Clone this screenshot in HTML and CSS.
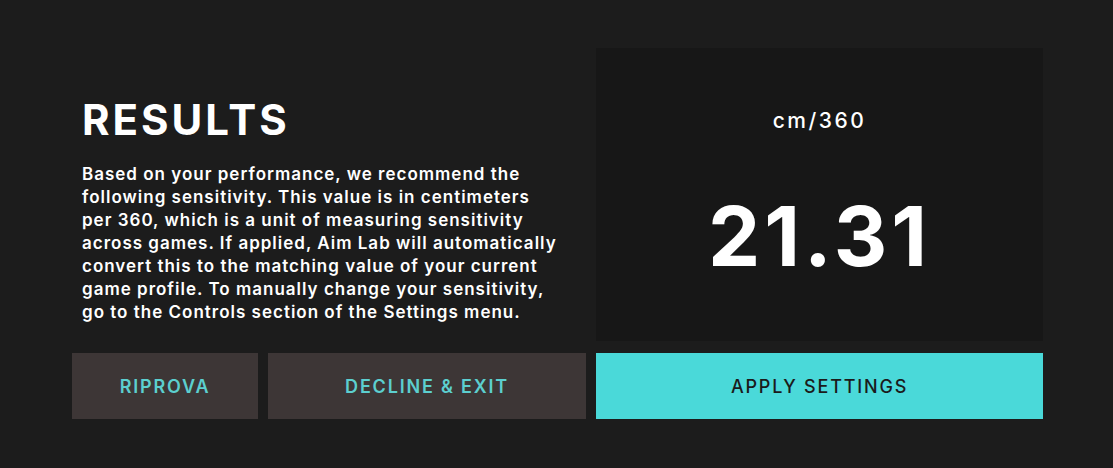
FILE: index.html
```html
<!DOCTYPE html>
<html lang="en">
<head>
    <meta charset="UTF-8">
    <meta name="viewport" content="width=device-width, initial-scale=1.0">
    <title>Results</title>
    <link rel="stylesheet" href="styles.css">
</head>
<body>
    <div class="screen">
        <div class="summary">
            <h1>RESULTS</h1>
            <p>Based on your performance, we recommend the following sensitivity. This value is in centimeters per 360, which is a unit of measuring sensitivity across games. If applied, Aim Lab will automatically convert this to the matching value of your current game profile. To manually change your sensitivity, go to the Controls section of the Settings menu.</p>
        </div>
        <div class="value-panel">
            <div class="unit">cm/360</div>
            <div class="value">21.31</div>
        </div>
        <button class="btn btn-dark">RIPROVA</button>
        <button class="btn btn-dark">DECLINE &amp; EXIT</button>
        <button class="btn btn-apply">APPLY SETTINGS</button>
    </div>
</body>
</html>
```
FILE: styles.css
```css
body {
    margin: 0;
    background-color: #1c1c1c;
    color: #fff;
    font-family: Inter, 'Noto Sans', sans-serif;
}
.screen {
    display: grid;
    grid-template-columns: 186px 318px 447px;
    grid-template-rows: 293px 66px;
    column-gap: 10px;
    row-gap: 12px;
    padding: 48px 0 0 72px;
}
.summary {
    grid-column: 1 / 3;
    padding: 50px 0 0 10px;
}
.summary h1 {
    margin: 0;
    font-size: 42px;
    font-weight: 700;
    letter-spacing: 3px;
    line-height: 44px;
}
.summary p {
    margin: 21px 0 0 0;
    width: 476px;
    font-size: 17px;
    font-weight: 600;
    line-height: 23px;
    letter-spacing: 1px;
}
.value-panel {
    background-color: #171717;
    display: flex;
    flex-direction: column;
    align-items: center;
}
.unit {
    margin-top: 60px;
    font-size: 21px;
    font-weight: 500;
    letter-spacing: 2.5px;
}
.value {
    margin-top: 58px;
    font-size: 83px;
    font-weight: 700;
    line-height: 90px;
    letter-spacing: 4px;
}
.btn {
    border: none;
    font-family: inherit;
    font-size: 18px;
    letter-spacing: 1.8px;
    cursor: pointer;
}
.btn-dark {
    background-color: #3d3636;
    color: #5ccfcf;
    font-weight: 600;
}
.btn-apply {
    background-color: #4ad9d9;
    color: #1b1b1b;
    font-weight: 500;
}
```
